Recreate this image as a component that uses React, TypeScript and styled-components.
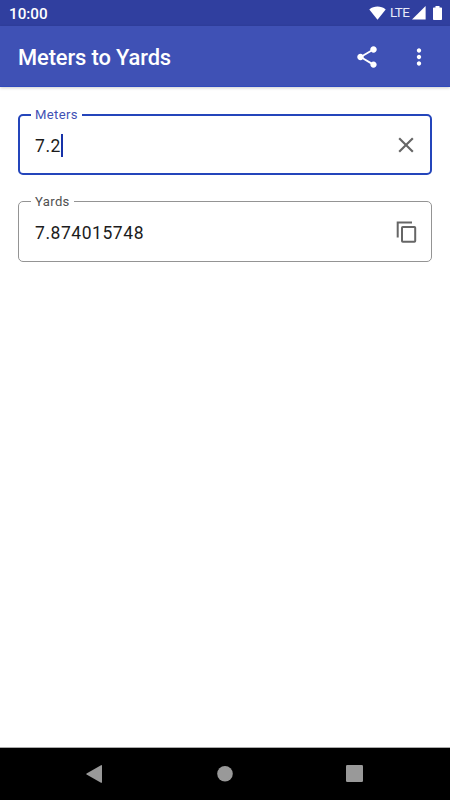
import React from "react";
import styled, { createGlobalStyle } from "styled-components";

const GlobalStyle = createGlobalStyle`
  * { box-sizing: border-box; }
  body { margin: 0; background: #fff; font-family: Roboto, sans-serif; }
`;

const Screen = styled.div`
  width: 450px;
  height: 800px;
  display: flex;
  flex-direction: column;
  overflow: hidden;
  background: #fff;
`;

const StatusBar = styled.div`
  height: 26px;
  flex: none;
  display: flex;
  align-items: center;
  justify-content: space-between;
  padding: 0 8px 0 9px;
  background: #303f9f;
  color: #fff;
`;

const Clock = styled.span`
  font-size: 15.2px;
  font-weight: 500;
  line-height: 18px;
  padding-top: 2px;
`;

const StatusIcons = styled.div`
  display: flex;
  align-items: center;
  height: 26px;
`;

const Network = styled.span`
  font-size: 13.4px;
  line-height: 16px;
  width: 20px;
  margin: 0 2px 0 4px;
  letter-spacing: -0.6px;
  color: #e8eaf8;
`;

const AppBar = styled.header`
  height: 61px;
  flex: none;
  display: flex;
  align-items: center;
  padding: 1px 18px 0;
  background: #3f51b5;
  color: #fff;
  border-bottom: 1px solid #304abc;
  box-shadow: 0 1px 3px rgba(0, 0, 0, 0.2);
`;

const Title = styled.h1`
  flex: 1;
  margin: 0;
  padding-top: 2px;
  font-size: 21.9px;
  font-weight: 500;
  line-height: 28px;
  letter-spacing: -0.12px;
`;

const Action = styled.button`
  display: flex;
  padding: 0;
  border: 0;
  background: none;
  color: inherit;
  & + & { margin-left: 26px; }
`;

const Form = styled.main`
  flex: 1;
  display: flex;
  flex-direction: column;
  gap: 18px;
  padding: 20px 18px;
`;

const Field = styled.fieldset<{ $active?: boolean }>`
  height: ${(p) => (p.$active ? 68 : 69)}px;
  min-width: 0;
  margin: 0;
  padding: 0;
  border: ${(p) => (p.$active ? "2px solid #2445bb" : "1px solid #949494")};
  border-radius: 5px;
`;

const Label = styled.legend<{ $active?: boolean }>`
  height: 16px;
  margin-left: ${(p) => (p.$active ? 11 : 12)}px;
  padding: 0 4px;
  font-size: 13.1px;
  line-height: ${(p) => (p.$active ? 16 : 18)}px;
  letter-spacing: 0.35px;
  color: ${(p) => (p.$active ? "#3f51b5" : "#505050")};
`;

const Content = styled.div<{ $active?: boolean }>`
  height: ${(p) => (p.$active ? 44 : 46)}px;
  display: flex;
  align-items: center;
  padding: 0 ${(p) => (p.$active ? "11px 0 15px" : "12px 0 16px")};
`;

const Value = styled.span`
  padding-top: 2px;
  font-size: 17.5px;
  line-height: 24px;
  letter-spacing: 0.55px;
  color: #1c1c1c;
`;

const Caret = styled.span`
  width: 2px;
  height: 23px;
  background: #1732a8;
`;

const FieldAction = styled.button`
  display: flex;
  margin-left: auto;
  padding: 0;
  border: 0;
  background: none;
  color: #666;
`;

const NavBar = styled.nav`
  height: 53px;
  flex: none;
  display: flex;
  align-items: center;
  justify-content: space-between;
  padding: 0 86px 0 85px;
  border-top: 1px solid #aaa;
  background: #000;
  color: #999;
`;

const Icon = ({ d, size = 26 }: { d: string; size?: number }) => (
  <svg width={size} height={size} viewBox="0 0 24 24" fill="currentColor">
    <path d={d} />
  </svg>
);

const SHARE =
  "M18 16.08c-.76 0-1.44.3-1.96.77L8.91 12.7c.05-.23.09-.46.09-.7s-.04-.47-.09-.7l7.05-4.11c.54.5 1.25.81 2.04.81 1.66 0 3-1.34 3-3s-1.34-3-3-3-3 1.34-3 3c0 .24.04.47.09.7L8.04 9.81C7.5 9.31 6.79 9 6 9c-1.66 0-3 1.34-3 3s1.34 3 3 3c.79 0 1.5-.31 2.04-.81l7.12 4.16c-.05.21-.08.43-.08.65 0 1.61 1.31 2.92 2.92 2.92s2.92-1.31 2.92-2.92-1.31-2.92-2.92-2.92z";
const MORE =
  "M12 8c1.1 0 2-.9 2-2s-.9-2-2-2-2 .9-2 2 .9 2 2 2zm0 2c-1.1 0-2 .9-2 2s.9 2 2 2 2-.9 2-2-.9-2-2-2zm0 6c-1.1 0-2 .9-2 2s.9 2 2 2 2-.9 2-2-.9-2-2-2z";
const CLEAR =
  "M19 6.41L17.59 5 12 10.59 6.41 5 5 6.41 10.59 12 5 17.59 6.41 19 12 13.41 17.59 19 19 17.59 13.41 12z";

const CopyIcon = () => (
  <svg width="26" height="26" viewBox="0 0 26 26" fill="none" stroke="currentColor" strokeWidth="2">
    <path d="M4.7 18.6V3.5H19" />
    <rect x="9" y="8" width="13.2" height="14.8" rx=".8" />
  </svg>
);

export default function App() {
  return (
    <>
      <GlobalStyle />
      <Screen>
        <StatusBar>
          <Clock>10:00</Clock>
          <StatusIcons>
            <svg width="17" height="14" viewBox="0 0 17 14" fill="#fff">
              <path d="M0.3 3.4C5 -0.4 12 -0.4 16.7 3.4L8.5 13.8Z" />
            </svg>
            <Network>LTE</Network>
            <svg width="14" height="14" viewBox="0 0 14 14" fill="#fff">
              <path d="M13.6 0V13.6H0Z" />
            </svg>
            <svg width="16" height="14" viewBox="0 0 16 14" fill="#fff">
              <path d="M9.5 0h4v1.5h1.7q.8 0 .8.8v10.9q0 .8-.8.8H7.8q-.8 0-.8-.8V2.3q0-.8.8-.8h1.7z" />
            </svg>
          </StatusIcons>
        </StatusBar>
        <AppBar>
          <Title>Meters to Yards</Title>
          <Action aria-label="Share"><Icon d={SHARE} /></Action>
          <Action aria-label="More"><Icon d={MORE} /></Action>
        </AppBar>
        <Form>
          <Field $active>
            <Label $active>Meters</Label>
            <Content $active>
              <Value>7.2</Value>
              <Caret />
              <FieldAction aria-label="Clear"><Icon d={CLEAR} /></FieldAction>
            </Content>
          </Field>
          <Field>
            <Label>Yards</Label>
            <Content>
              <Value>7.874015748</Value>
              <FieldAction aria-label="Copy"><CopyIcon /></FieldAction>
            </Content>
          </Field>
        </Form>
        <NavBar>
          <svg width="18" height="20" viewBox="0 0 18 20" fill="currentColor">
            <path d="M16 1.2Q17 .8 17 1.8V18.2Q17 19.2 16 18.7L1.6 10.6Q.6 10 1.6 9.4Z" />
          </svg>
          <svg width="16" height="16" viewBox="0 0 16 16" fill="currentColor">
            <circle cx="8" cy="7.8" r="7.8" />
          </svg>
          <svg width="18" height="18" viewBox="0 0 18 18" fill="currentColor">
            <rect width="17" height="17" rx="1.2" />
          </svg>
        </NavBar>
      </Screen>
    </>
  );
}
